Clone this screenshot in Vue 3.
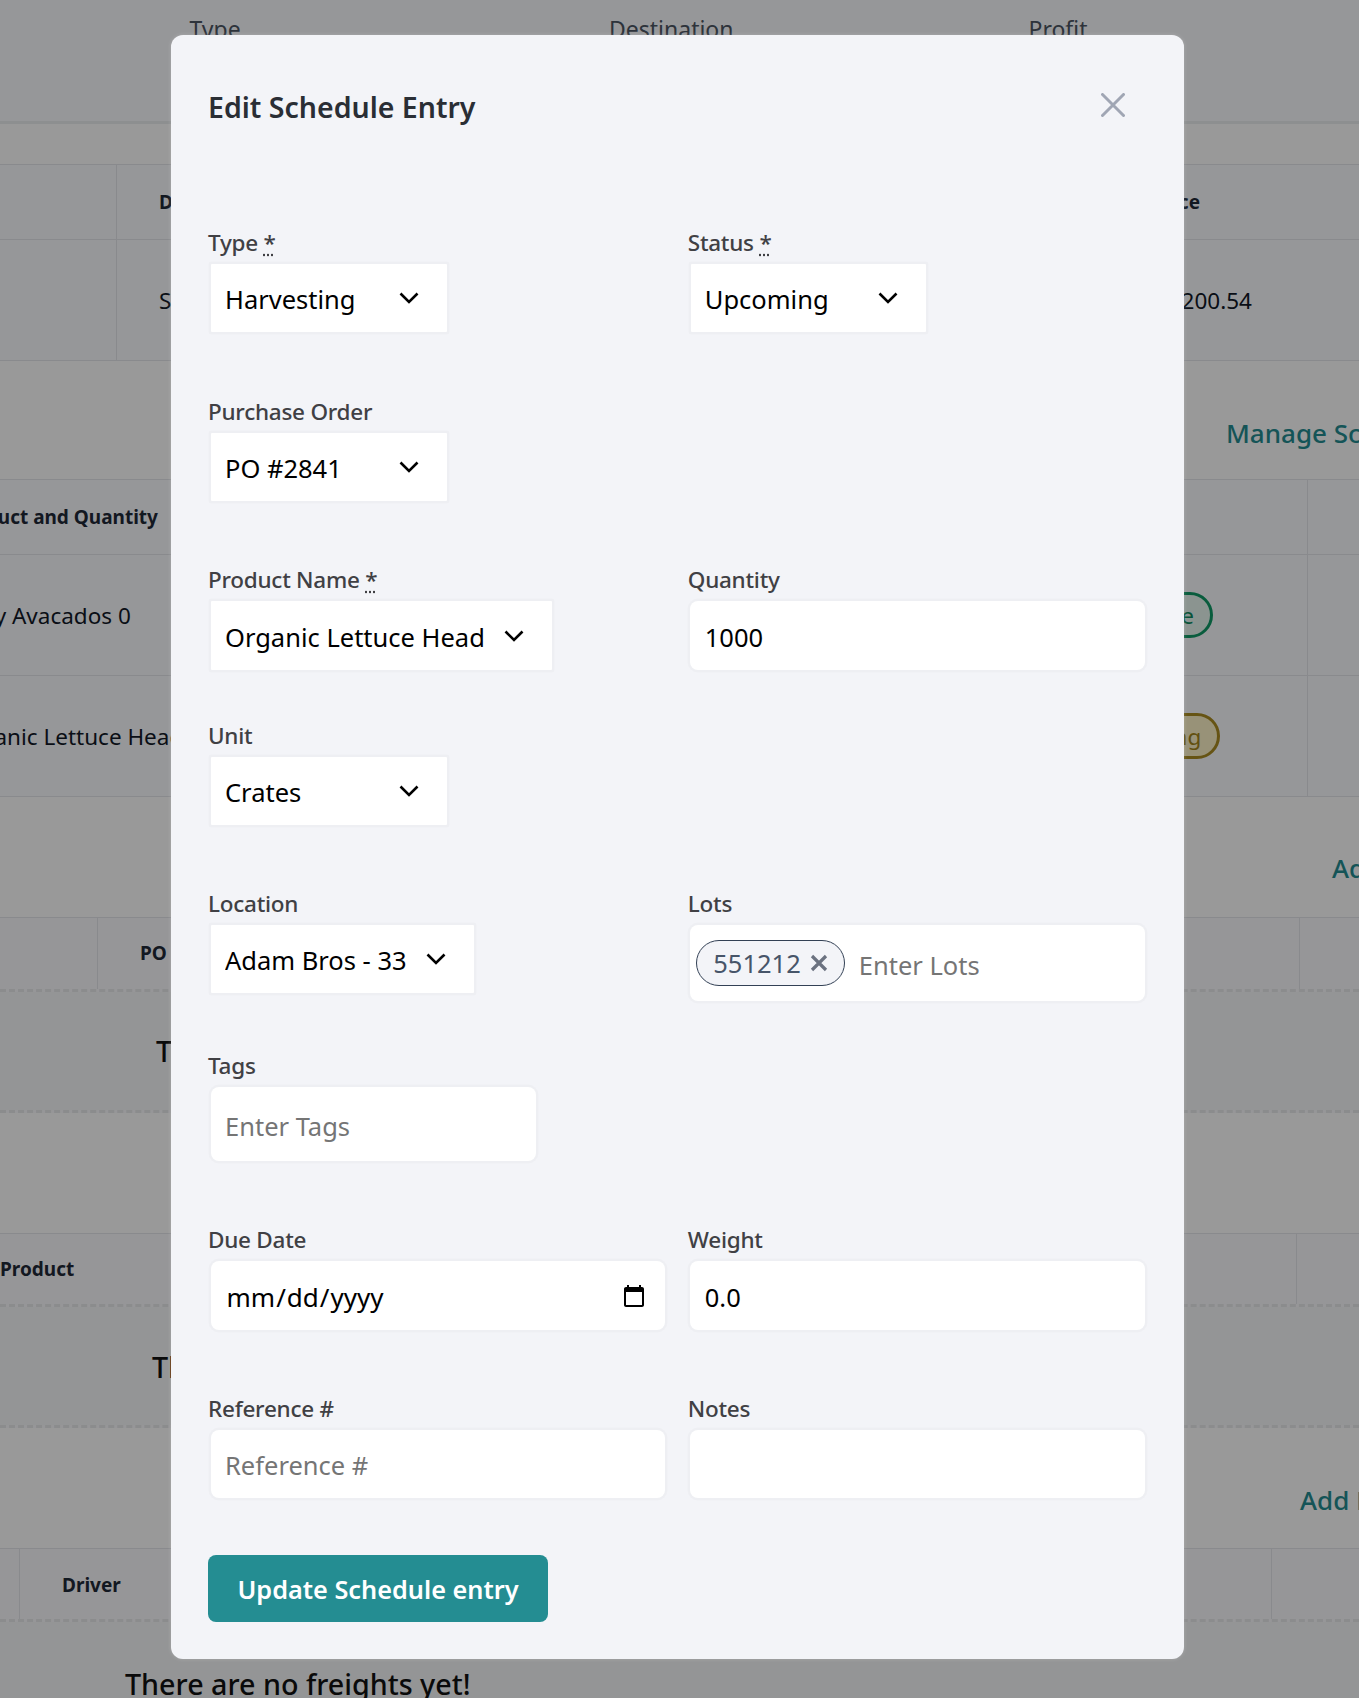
<template>
  <div class="page">
    <!-- page behind the modal -->
    <div class="summary">
      <span>Type</span>
      <span>Destination</span>
      <span>Profit</span>
    </div>

    <div class="tbl tbl-orders">
      <div class="tbl-row head">
        <div class="cell first"></div>
        <div class="cell grow b">Date</div>
        <div class="cell end-head b">Price</div>
      </div>
      <div class="tbl-row tall">
        <div class="cell first"></div>
        <div class="cell grow">Site</div>
        <div class="cell end-val">$1,200.54</div>
      </div>
    </div>

    <div class="section-link manage">Manage Schedule</div>

    <div class="tbl tbl-schedule">
      <div class="tbl-row head">
        <div class="cell grow product-col b">Product and Quantity</div>
        <div class="cell action-col"></div>
      </div>
      <div v-for="row in scheduleRows" :key="row.name" class="tbl-row tall">
        <div class="cell grow product-col">{{ row.name }}</div>
        <div class="cell pill-col">
          <span class="status-pill" :class="row.cls">{{ row.status }}</span>
        </div>
        <div class="cell action-col"></div>
      </div>
    </div>

    <div class="section-link add-one">Add</div>

    <div class="tbl tbl-dash tbl-po">
      <div class="tbl-row head">
        <div class="cell first"></div>
        <div class="cell grow b">PO</div>
        <div class="cell last"></div>
      </div>
      <div class="tbl-row empty">
        <div class="empty-fill">
          <span class="empty-text">There are no items yet!</span>
        </div>
      </div>
    </div>

    <div class="tbl tbl-dash tbl-products">
      <div class="tbl-row head">
        <div class="cell grow no-pad b">Product</div>
        <div class="cell last"></div>
      </div>
      <div class="tbl-row empty">
        <div class="empty-fill">
          <span class="empty-text">There are no products yet!</span>
        </div>
      </div>
    </div>

    <div class="section-link add-two">Add Freight</div>

    <div class="tbl tbl-dash tbl-freight">
      <div class="tbl-row head">
        <div class="cell first"></div>
        <div class="cell grow b">Driver</div>
        <div class="cell last"></div>
      </div>
      <div class="tbl-row empty">
        <div class="empty-fill">
          <span class="empty-text">There are no freights yet!</span>
        </div>
      </div>
    </div>

    <div class="backdrop"></div>

    <div class="modal">
      <div class="modal-head">
        <h2 class="modal-title">Edit Schedule Entry</h2>
        <button class="close-btn" type="button" aria-label="Close">
          <svg viewBox="0 0 24 24" width="24" height="24" fill="none" stroke="currentColor" stroke-width="3" stroke-linecap="round">
            <path d="M1.5 1.5 22.5 22.5M22.5 1.5 1.5 22.5" />
          </svg>
        </button>
      </div>

      <form class="form" @submit.prevent>
        <div class="form-row first-row">
          <div class="field">
            <label>Type <abbr class="req">*</abbr></label>
            <div class="select-wrap">
              <select class="select"><option>Harvesting</option></select>
              <svg class="chevron" viewBox="0 0 20 12" fill="none"><path d="M1.5 1.5 10 10l8.5-8.5" stroke="#000" stroke-width="2.6" /></svg>
            </div>
          </div>
          <div class="field">
            <label>Status <abbr class="req">*</abbr></label>
            <div class="select-wrap">
              <select class="select"><option>Upcoming</option></select>
              <svg class="chevron" viewBox="0 0 20 12" fill="none"><path d="M1.5 1.5 10 10l8.5-8.5" stroke="#000" stroke-width="2.6" /></svg>
            </div>
          </div>
        </div>

        <div class="form-row">
          <div class="field">
            <label>Purchase Order</label>
            <div class="select-wrap">
              <select class="select"><option>PO #2841</option></select>
              <svg class="chevron" viewBox="0 0 20 12" fill="none"><path d="M1.5 1.5 10 10l8.5-8.5" stroke="#000" stroke-width="2.6" /></svg>
            </div>
          </div>
        </div>

        <div class="form-row tight">
          <div class="field">
            <label>Product Name <abbr class="req">*</abbr></label>
            <div class="select-wrap">
              <select class="select s69"><option>Organic Lettuce Head</option></select>
              <svg class="chevron" viewBox="0 0 20 12" fill="none"><path d="M1.5 1.5 10 10l8.5-8.5" stroke="#000" stroke-width="2.6" /></svg>
            </div>
          </div>
          <div class="field">
            <label>Quantity</label>
            <input class="input" type="text" value="1000" />
          </div>
        </div>

        <div class="form-row">
          <div class="field">
            <label>Unit</label>
            <div class="select-wrap">
              <select class="select"><option>Crates</option></select>
              <svg class="chevron" viewBox="0 0 20 12" fill="none"><path d="M1.5 1.5 10 10l8.5-8.5" stroke="#000" stroke-width="2.6" /></svg>
            </div>
          </div>
        </div>

        <div class="form-row tight lots-row">
          <div class="field">
            <label>Location</label>
            <div class="select-wrap">
              <select class="select"><option>Adam Bros - 33</option></select>
              <svg class="chevron" viewBox="0 0 20 12" fill="none"><path d="M1.5 1.5 10 10l8.5-8.5" stroke="#000" stroke-width="2.6" /></svg>
            </div>
          </div>
          <div class="field">
            <label>Lots</label>
            <div class="input lots">
              <span class="tag">551212
                <svg class="tag-x" viewBox="0 0 18 18" fill="none" stroke="currentColor" stroke-width="3.2"><path d="M2 2 16 16M16 2 2 16" /></svg>
              </span>
              <input class="lots-input" type="text" placeholder="Enter Lots" />
            </div>
          </div>
        </div>

        <div class="form-row">
          <div class="field">
            <label>Tags</label>
            <input class="input tags" type="text" placeholder="Enter Tags" />
          </div>
        </div>

        <div class="form-row">
          <div class="field">
            <label>Due Date</label>
            <input class="input date" type="date" />
          </div>
          <div class="field">
            <label>Weight</label>
            <input class="input" type="text" value="0.0" />
          </div>
        </div>

        <div class="form-row">
          <div class="field">
            <label>Reference #</label>
            <input class="input" type="text" placeholder="Reference #" />
          </div>
          <div class="field">
            <label>Notes</label>
            <input class="input" type="text" />
          </div>
        </div>

        <button class="submit" type="submit">Update Schedule entry</button>
      </form>
    </div>
  </div>
</template>

<script setup>
const scheduleRows = [
  { name: 'Baby Avacados 0', status: 'Complete', cls: 'green' },
  { name: 'Organic Lettuce Head', status: 'Upcoming', cls: 'yellow' }
]
</script>

<style>
html, body { margin: 0; background: #fff; }
</style>

<style scoped>
.page {
  position: relative;
  height: 1698px;
  overflow: hidden;
  background: #fff;
  color: #111827;
  font-family: "Noto Sans", "Open Sans", sans-serif;
  font-size: 22.5px;
}

/* background page */
.summary {
  display: grid;
  grid-template-columns: repeat(3, 419.5px);
  height: 124px;
  padding: 13px 0 0 189.5px;
  box-sizing: border-box;
  background: #fbfcff;
  border-bottom: 3px solid #eceef0;
  color: #4b5563;
  font-size: 23px;
}
.tbl { background: #fafcff; }
.tbl-row { display: flex; box-sizing: border-box; border-bottom: 1px solid #e5e7eb; }
.head { height: 75px; }
.tall { height: 121px; }
.cell { display: flex; align-items: center; padding-left: 42px; box-sizing: border-box; }
.b { font-weight: 700; font-size: 19px; color: #1f2937; }
.first { border-right: 1px solid #e5e7eb; padding: 0; }
.grow { flex: 1; white-space: nowrap; }
.last { width: 88px; border-left: 1px solid #e5e7eb; padding: 0; }
.no-pad { padding-left: 0; }
.tbl-orders { margin-top: 40px; border-top: 1px solid #e5e7eb; }
.tbl-orders .first { width: 117px; }
.end-head { padding-right: 159px; }
.end-val { padding-right: 107px; }
.section-link { color: #248d92; font-size: 26px; font-weight: 500; white-space: nowrap; }
.manage { margin: 53px 0 27px 1226px; line-height: 38px; }
.tbl-schedule { border-top: 1px solid #e5e7eb; }
.product-col { margin-left: -46px; padding-left: 0; }
.action-col { width: 52px; border-left: 1px solid #e5e7eb; padding: 0; }
.pill-col { width: 234px; padding: 0; }
.status-pill {
  display: inline-flex;
  align-items: center;
  height: 46px;
  padding: 0 16px;
  border-radius: 23px;
  border: 3px solid;
  box-sizing: border-box;
}
.green { color: #0f8a5f; border-color: #0f9a66; background: #e8f7f0; }
.yellow { color: #a4861a; border-color: #ab8c22; background: #fdf3c8; }
.add-one { margin: 52px 0 30px 1332px; line-height: 38px; }
.tbl-dash .tbl-row { border-bottom: 3px dashed #e8e9ec; }
.tbl-dash { background: #fafbfd; border-top: 1px solid #e5e7eb; }
.tbl-dash .head { height: 73.5px; }
.empty { height: 121px; }
.empty-fill { flex: 1; display: flex; align-items: center; background: #f7f8fa; }
.empty-text { font-size: 28.7px; font-weight: 500; color: #111; }
.tbl-po .first { width: 98px; }
.tbl-po .last { width: 60px; }
.tbl-po .empty-text { margin-left: 156px; }
.tbl-products { margin-top: 120px; }
.tbl-products .last { width: 63px; }
.tbl-products .empty-text { margin-left: 152px; }
.add-two { margin: 53px 0 28.5px 1300px; line-height: 38px; }
.tbl-freight .first { width: 20px; }
.tbl-freight .last { width: 88px; }
.tbl-freight .b { padding-top: 3px; }
.tbl-freight .empty-text { margin: 4px 0 0 125px; }

.backdrop {
  position: absolute;
  inset: 0;
  background: rgba(0, 0, 0, 0.4);
}

/* modal */
.modal {
  position: absolute;
  top: 35px;
  left: 171px;
  width: 1013px;
  box-sizing: border-box;
  padding: 0 37px 37px 37px;
  background: #f3f4f8;
  border-radius: 12px;
  box-shadow: 0 0 4px rgba(255, 255, 255, 0.2);
}
.modal-head {
  display: flex;
  justify-content: space-between;
  height: 193px;
  padding-top: 52px;
  box-sizing: border-box;
}
.modal-title {
  margin: 0;
  font-size: 28.5px;
  line-height: 40px;
  font-weight: 600;
  color: #2a2e35;
}
.close-btn {
  width: 24px;
  height: 24px;
  margin: 6px 22px 0 0;
  padding: 0;
  border: 0;
  background: none;
  color: #a0a6b4;
}
.close-btn svg { display: block; }

.form-row {
  display: grid;
  grid-template-columns: 1fr 1fr;
  column-gap: 20.5px;
  margin-bottom: 64px;
}
.form-row.first-row { margin-bottom: 65px; }
.form-row.tight { margin-bottom: 51px; }
.form-row.lots-row { margin-bottom: 50px; }
.field { min-width: 0; }
label {
  display: block;
  margin-bottom: 6px;
  font-size: 22.5px;
  letter-spacing: -0.25px;
  line-height: 30px;
  font-weight: 500;
  color: #404044;
}
.req {
  text-decoration: underline dotted;
  text-underline-offset: 3px;
}
.select-wrap {
  position: relative;
  display: inline-block;
  margin-left: 3px;
}
.select {
  display: block;
  appearance: none;
  min-width: 235.5px;
  height: 68px;
  padding: 2px 67px 0 14px;
  border: 0;
  border-radius: 1px;
  background: #fff;
  box-shadow: 0 0 0 2.5px rgba(0, 0, 0, 0.02);
  color: #000;
  font: inherit;
  font-size: 25.5px;
}
.select.s69 { height: 69px; }
.chevron {
  position: absolute;
  top: 50%;
  right: 28px;
  width: 20px;
  height: 12px;
  margin-top: -6px;
  pointer-events: none;
}
.input {
  display: block;
  box-sizing: border-box;
  width: calc(100% - 5px);
  height: 68.5px;
  margin: 0 2.5px;
  padding: 3px 14.5px 0;
  border: 0;
  border-radius: 8px;
  background: #fff;
  box-shadow: 0 0 0 2.5px rgba(0, 0, 0, 0.02);
  color: #000;
  font: inherit;
  font-size: 25.5px;
}
.input::placeholder, .lots-input::placeholder { color: #757575; opacity: 1; }
.lots {
  display: flex;
  align-items: center;
  gap: 14px;
  height: 76px;
  padding: 0 6px;
}
.tag {
  display: inline-flex;
  align-items: center;
  gap: 9px;
  flex: none;
  height: 46px;
  padding: 0 16px;
  box-sizing: border-box;
  border: 1px solid #334155;
  border-radius: 23px;
  background: #f3f4f8;
  color: #475569;
}
.tag-x { width: 18px; height: 18px; color: #6b7280; }
.lots-input {
  flex: 1;
  min-width: 0;
  border: 0;
  outline: 0;
  padding: 4px 0 0;
  background: none;
  font: inherit;
  font-size: 25.5px;
}
.tags { width: 325px; height: 74px; }
.date { padding-left: 15px; font-size: 26px; }
.date::-webkit-calendar-picker-indicator {
  width: 26px;
  height: 26px;
  margin-right: 3px;
  padding: 0;
}
.submit {
  display: block;
  width: 340px;
  height: 67px;
  margin-top: -7px;
  border: 0;
  border-radius: 8px;
  background: #248d92;
  color: #fff;
  font: inherit;
  font-size: 25.3px;
  font-weight: 600;
}
</style>
